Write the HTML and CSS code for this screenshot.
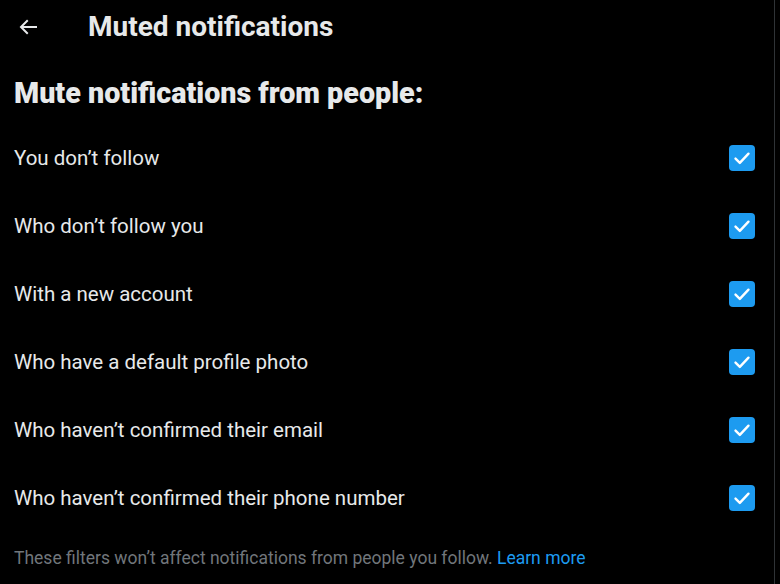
FILE: index.html
```html
<!DOCTYPE html>
<html lang="en">
<head>
    <meta charset="UTF-8">
    <meta name="viewport" content="width=device-width, initial-scale=1.0">
    <title>Muted notifications</title>
    <link rel="stylesheet" href="styles.css">
</head>
<body>

    <div class="page">
        <!-- header -->
        <div class="header">
            <span class="back">
                <svg viewBox="0 0 24 24" width="24" height="24"><path d="M7.414 13l5.043 5.04-1.414 1.42L3.586 12l7.457-7.46 1.414 1.42L7.414 11H21v2H7.414z" fill="#e7e9ea"/></svg>
            </span>
            <h1>Muted notifications</h1>
        </div>

        <h2>Mute notifications from people:</h2>

        <div class="row"><span>You don’t follow</span><span class="check"><svg viewBox="0 0 24 24"><path d="M6 12.5l4 4 8-8.5" /></svg></span></div>
        <div class="row"><span>Who don’t follow you</span><span class="check"><svg viewBox="0 0 24 24"><path d="M6 12.5l4 4 8-8.5" /></svg></span></div>
        <div class="row"><span>With a new account</span><span class="check"><svg viewBox="0 0 24 24"><path d="M6 12.5l4 4 8-8.5" /></svg></span></div>
        <div class="row"><span>Who have a default profile photo</span><span class="check"><svg viewBox="0 0 24 24"><path d="M6 12.5l4 4 8-8.5" /></svg></span></div>
        <div class="row"><span>Who haven’t confirmed their email</span><span class="check"><svg viewBox="0 0 24 24"><path d="M6 12.5l4 4 8-8.5" /></svg></span></div>
        <div class="row"><span>Who haven’t confirmed their phone number</span><span class="check"><svg viewBox="0 0 24 24"><path d="M6 12.5l4 4 8-8.5" /></svg></span></div>

        <p class="note">These filters won’t affect notifications from people you follow. <a href="#">Learn more</a></p>
    </div>

</body>
</html>
```

FILE: styles.css
```css
body {
    margin: 0;
    background: #000;
    font-family: Roboto, "Noto Sans", sans-serif;
    color: #e7e9ea;
}

.page {
    width: 775px;
    height: 584px;
    border-right: 1px solid #2f3336;
    box-sizing: border-box;
    overflow: hidden;
}

.header {
    display: flex;
    align-items: center;
    height: 53px;
    padding-left: 16px;
}

.back {
    display: flex;
    width: 72px;
}

h1 {
    margin: 0;
    font-size: 28px;
    font-weight: bold;
}

h2 {
    margin: 23px 0 14px 14px;
    font-size: 28.7px;
    font-weight: 900;
}

.row {
    display: flex;
    justify-content: space-between;
    align-items: center;
    height: 68px;
    padding: 0 19px 0 14px;
    font-size: 20.5px;
}

.check {
    width: 26px;
    height: 26px;
    background: #1d9bf0;
    border-radius: 4px;
    display: flex;
}

.check svg {
    width: 26px;
    height: 26px;
    fill: none;
    stroke: #fff;
    stroke-width: 2.2;
    stroke-linecap: round;
    stroke-linejoin: round;
}

/* texte gris en bas */
.note {
    margin: 16px 0 0 14px;
    font-size: 17.5px;
    color: #71767b;
}

.note a {
    color: #1d9bf0;
    text-decoration: none;
}
```
